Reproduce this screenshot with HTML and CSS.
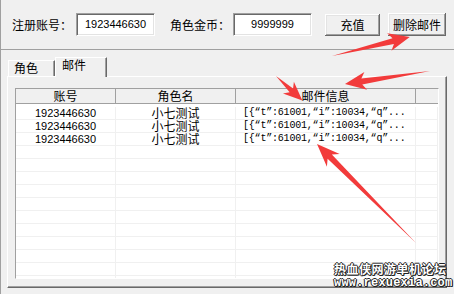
FILE: index.html
```html
<!DOCTYPE html>
<html lang="zh-CN">
<head>
    <meta charset="UTF-8">
    <title>邮件管理</title>
    <link rel="stylesheet" href="styles.css">
</head>
<body>

<div class="win">
    <div class="toolbar">
        <span class="lbl">注册账号：</span>
        <div class="field">1923446630</div>
        <span class="lbl lbl2">角色金币：</span>
        <div class="field field2">9999999</div>
        <button class="btn b1">充值</button>
        <button class="btn b2">删除邮件</button>
    </div>

    <div class="tabs">
        <div class="strip">
            <div class="tab">角色</div>
            <div class="tab on">邮件</div>
        </div>
        <div class="panel">
            <div class="list">
                <div class="head">
                    <div>账号</div>
                    <div>角色名</div>
                    <div>邮件信息</div>
                    <div class="last"></div>
                </div>
                <div class="rows">
                    <div class="row"><div class="c1">1923446630</div><div class="c2">小七测试</div><div class="c3">[{“t”:61001,“i”:10034,“q”...</div><div></div></div>
                    <div class="row"><div class="c1">1923446630</div><div class="c2">小七测试</div><div class="c3">[{“t”:61001,“i”:10034,“q”...</div><div></div></div>
                    <div class="row"><div class="c1">1923446630</div><div class="c2">小七测试</div><div class="c3">[{“t”:61001,“i”:10034,“q”...</div><div></div></div>
                    <div class="row"><div></div><div></div><div></div><div></div></div>
                    <div class="row"><div></div><div></div><div></div><div></div></div>
                    <div class="row"><div></div><div></div><div></div><div></div></div>
                    <div class="row"><div></div><div></div><div></div><div></div></div>
                    <div class="row"><div></div><div></div><div></div><div></div></div>
                    <div class="row"><div></div><div></div><div></div><div></div></div>
                    <div class="row"><div></div><div></div><div></div><div></div></div>
                    <div class="row"><div></div><div></div><div></div><div></div></div>
                    <div class="row"><div></div><div></div><div></div><div></div></div>
                    <div class="row"><div></div><div></div><div></div><div></div></div>
                    <div class="row"><div></div><div></div><div></div><div></div></div>
                </div>
            </div>
        </div>
    </div>

    <div class="mark">
        <div class="cn">热血侠网游单机论坛</div>
        <div class="en">www.rexuexia.com</div>
    </div>

    <!-- red pointer arrows drawn over the screenshot -->
    <svg class="arrows" width="454" height="294" viewBox="0 0 454 294">
        <g fill="#f23b3b">
            <polygon transform="translate(332,56) rotate(-13.7)" points="0,0 63,-3 59,-9 80,0 59,9 63,3"/>
            <polygon transform="translate(430,71) rotate(171.3)" points="0,0 69,-3 65,-9 86,0 65,9 69,3"/>
            <polygon transform="translate(276,76) rotate(43)" points="0,0 21,-2.5 17,-8 36,0 17,8 21,2.5"/>
            <polygon transform="translate(416,243) rotate(225)" points="0,0 122,-3 117,-9 140,0 117,9 122,3"/>
        </g>
    </svg>
</div>

</body>
</html>
```

FILE: styles.css
```css
* {
    margin: 0;
    padding: 0;
    box-sizing: border-box;
}

body {
    width: 454px;
    height: 294px;
    overflow: hidden;
    background-color: #f0f0f0;
    font-family: "Noto Sans CJK SC", sans-serif;
    font-size: 12px;
    color: #000;
}

.win {
    position: relative;
    height: 294px;
    border-left: 1px solid #a0a0a0;
}

/* top row with inputs and buttons */
.toolbar {
    display: flex;
    align-items: center;
    height: 50px;
    padding-left: 11px;
    border-bottom: 1px solid #a0a0a0;
}

.lbl {
    width: 60px;
    line-height: 14px;
    white-space: nowrap;
}

.lbl2 {
    margin-left: 15px;
}

.field {
    width: 79px;
    height: 23px;
    margin-left: 4px;
    background-color: #fff;
    border-top: 1px solid #a0a0a0;
    border-left: 1px solid #a0a0a0;
    border-right: 1px solid #fff;
    border-bottom: 1px solid #fff;
    box-shadow: inset 1px 1px #696969, inset -1px -1px #e3e3e3;
    font-family: "Liberation Sans", Arial, sans-serif;
    font-size: 11px;
    line-height: 21px;
    text-align: center;
}

.field2 {
    margin-left: 3px;
}

.btn {
    height: 22px;
    border: none;
    background-color: #f0f0f0;
    box-shadow: inset -1px -1px #696969, inset 1px 1px #fff, inset -2px -2px #a0a0a0, inset 2px 2px #e3e3e3;
    font-family: inherit;
    font-size: 12px;
    color: #000;
}

.b1 {
    width: 55px;
    margin-left: 13px;
}

.b2 {
    width: 58px;
    height: 23px;
    margin-left: 8px;
}

/* tab control */
.tabs {
    width: 440px;
    margin: 7px 0 0 6px;
}

.strip {
    display: flex;
    align-items: flex-end;
    height: 19px;
    padding-left: 1px;
}

.tab {
    width: 47px;
    height: 16px;
    padding-left: 5px;
    line-height: 14px;
    border-top: 1px solid #fff;
    border-left: 1px solid #fff;
    border-right: 1px solid #696969;
    box-shadow: inset -1px 0 #a0a0a0;
}

.tab.on {
    position: relative;
    z-index: 1;
    width: 52px;
    height: 20px;
    margin-bottom: -1px;
    padding-left: 6px;
    line-height: 13px;
    background-color: #f0f0f0;
}

.panel {
    height: 212px;
    padding: 11px 0 0 7px;
    border-top: 1px solid #fff;
    border-left: 1px solid #fff;
    border-right: 1px solid #696969;
    border-bottom: 1px solid #696969;
    box-shadow: inset -1px -1px #a0a0a0;
}

/* list view */
.list {
    width: 424px;
    height: 191px;
    overflow: hidden;
    background-color: #fff;
    border-top: 1px solid #a0a0a0;
    border-left: 1px solid #a0a0a0;
    border-right: 1px solid #fff;
    border-bottom: 1px solid #fff;
}

.head, .row {
    display: grid;
    grid-template-columns: 100px 120px 180px 1fr;
}

.head {
    height: 15px;
    background-color: #f0f0f0;
    border-bottom: 1px solid #a0a0a0;
}

.head div {
    border-right: 1px solid #a0a0a0;
    text-align: center;
    line-height: 14px;
}

.head .last {
    border-right: none;
}

.row {
    height: 13px;
    border-bottom: 1px solid #f0f0f0;
}

.row:first-child {
    height: 16px;
    padding-top: 3px;
}

.row div {
    border-right: 1px solid #f0f0f0;
    line-height: 12px;
    white-space: nowrap;
    overflow: hidden;
}

.row .c2 {
    overflow: visible;
}

.c1 {
    text-align: center;
    font-family: "Liberation Sans", Arial, sans-serif;
    font-size: 11px;
}

.c2 {
    text-align: center;
}

.c3 {
    padding-left: 7px;
    font-family: "Liberation Mono", monospace;
    font-size: 10px;
    letter-spacing: -0.2px;
}

/* watermark */
.mark {
    position: absolute;
    left: 333px;
    top: 260px;
    color: #fff;
    font-weight: bold;
    text-shadow: 1px 0 #222, -1px 0 #222, 0 1px #222, 0 -1px #222, 1px 1px #222;
}

.mark .cn {
    font-size: 12px;
    letter-spacing: 0.5px;
    line-height: 17px;
}

.mark .en {
    font-family: "Liberation Mono", monospace;
    font-size: 12px;
    line-height: 13px;
    letter-spacing: 0.2px;
}

.arrows {
    position: absolute;
    left: -1px;
    top: 0;
    pointer-events: none;
}
```
